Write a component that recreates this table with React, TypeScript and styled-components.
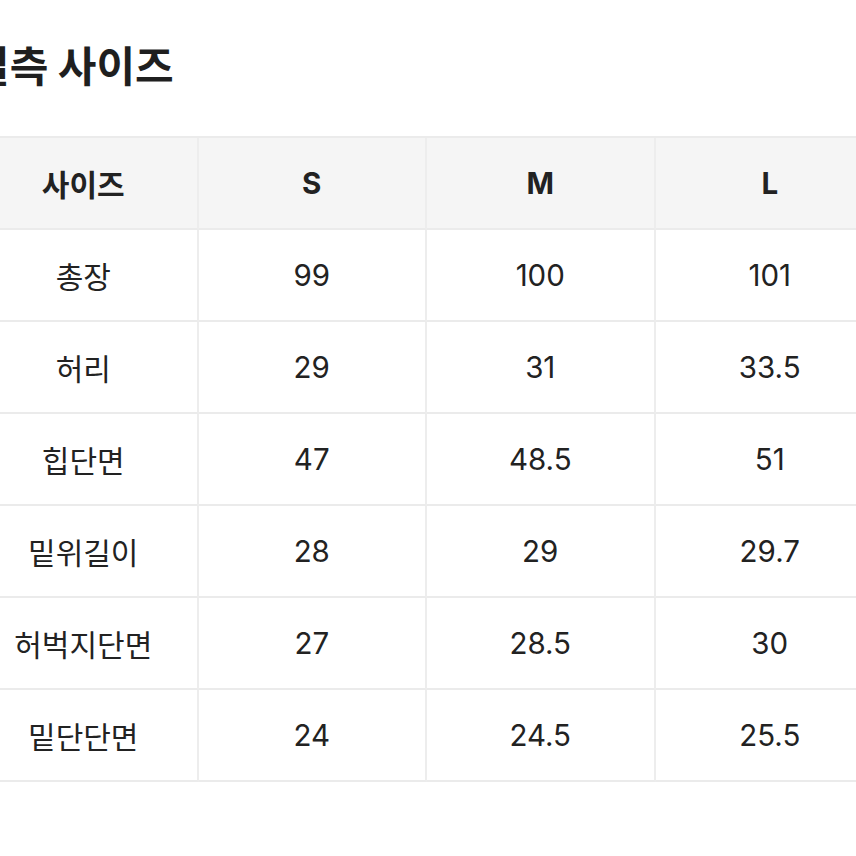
import React from 'react'
import styled, { createGlobalStyle } from 'styled-components'

const GlobalStyle = createGlobalStyle`
  html, body {
    margin: 0;
    padding: 0;
    background: #ffffff;
    overflow: hidden;
  }
  body {
    font-family: Inter, "Noto Sans CJK KR", sans-serif;
    color: #222222;
  }
`

const Page = styled.section`
  width: 914px;
  margin-left: -30px;
`

const Title = styled.h2`
  margin: 0 0 0 1px;
  padding-top: 38px;
  font-family: "Noto Sans CJK KR", sans-serif;
  font-size: 42px;
  line-height: 52px;
  font-weight: 700;
  color: #1f1f1f;
`

const Table = styled.table`
  margin-top: 46px;
  width: 914px;
  table-layout: fixed;
  border-spacing: 0;
  border-top: 2px solid #ebebeb;
`

const Cell = styled.td<{ $head?: boolean; $last?: boolean; $label?: boolean }>`
  height: 90px;
  padding: 0;
  text-align: center;
  vertical-align: middle;
  font-size: ${p => (p.$label ? '30px' : '29.5px')};
  font-family: ${p => (p.$label ? '"Noto Sans CJK KR", sans-serif' : 'Inter, "Noto Sans CJK KR", sans-serif')};
  font-weight: ${p => (p.$head ? 700 : 400)};
  color: #222222;
  background: ${p => (p.$head ? '#f5f5f5' : '#ffffff')};
  border-bottom: 2px solid #ebebeb;
  border-right: ${p => (p.$last ? 'none' : '2px solid #ededed')};
`

const sizes = ['S', 'M', 'L']

const rows: [string, string[]][] = [
  ['총장', ['99', '100', '101']],
  ['허리', ['29', '31', '33.5']],
  ['힙단면', ['47', '48.5', '51']],
  ['밑위길이', ['28', '29', '29.7']],
  ['허벅지단면', ['27', '28.5', '30']],
  ['밑단단면', ['24', '24.5', '25.5']],
]

export default function App() {
  return (
    <Page>
      <GlobalStyle />
      <Title>실측 사이즈</Title>
      <Table>
        <thead>
          <tr>
            <Cell as="th" $head $label>사이즈</Cell>
            {sizes.map((s, i) => (
              <Cell as="th" key={s} $head $last={i === sizes.length - 1}>
                {s}
              </Cell>
            ))}
          </tr>
        </thead>
        <tbody>
          {rows.map(([label, values]) => (
            <tr key={label}>
              <Cell $label>{label}</Cell>
              {values.map((v, i) => (
                <Cell key={i} $last={i === values.length - 1}>
                  {v}
                </Cell>
              ))}
            </tr>
          ))}
        </tbody>
      </Table>
    </Page>
  )
}
